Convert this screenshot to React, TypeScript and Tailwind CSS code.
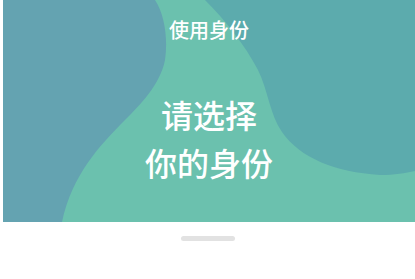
export default function App() {
  return (
    <div className="w-[415px] h-[279px] bg-white overflow-hidden" style={{ fontFamily: '"Noto Sans CJK SC", "Noto Sans", sans-serif' }}>
      {/* header panel */}
      <div className="relative ml-[3px] h-[222px] bg-[#6bc1ae] overflow-hidden">
        <svg className="absolute inset-0 w-full h-full" viewBox="3 0 412 222" preserveAspectRatio="none">
          <path d="M0 0 L155 0 C165 15 168 40 165 60 C160 85 140 105 125 120 C100 145 72 175 62 222 L0 222 Z" fill="#64a3b1" />
          <path d="M205 0 C225 20 245 45 258 70 C268 90 270 115 282 132 C300 158 335 172 380 175 C395 175 405 173 415 171 L415 0 Z" fill="#5cabad" />
        </svg>
        <div className="relative flex flex-col items-center text-white">
          <div className="mt-[15px] text-[20px] leading-[30px] font-medium">使用身份</div>
          <div className="mt-[45px] text-[32px] leading-[48px] font-medium text-center">
            请选择
            <br />
            你的身份
          </div>
        </div>
      </div>
      <div className="mx-auto mt-[14px] w-[54px] h-[5px] rounded-full bg-[#e2e2e2]" />
    </div>
  );
}
